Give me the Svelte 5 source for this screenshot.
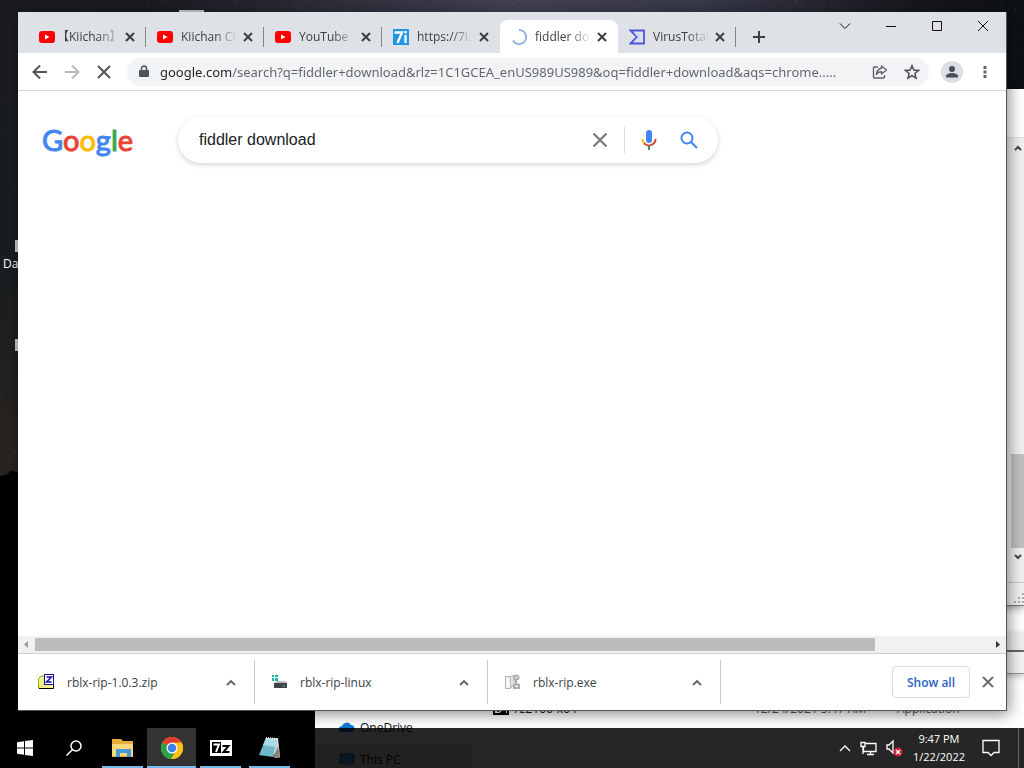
<script>
  let query = 'fiddler download';
  let address = 'google.com/search?q=fiddler+download&rlz=1C1GCEA_enUS989US989&oq=fiddler+download&aqs=chrome.....';
  let activeTab = 4;

  const tabs = [
    { icon: 'youtube', title: '【Kiichan】' },
    { icon: 'youtube', title: 'Kiichan Ch' },
    { icon: 'youtube', title: 'YouTube' },
    { icon: 'seven', title: 'https://7i.' },
    { icon: 'loading', title: 'fiddler do' },
    { icon: 'virus', title: 'VirusTotal' }
  ];

  const downloads = [
    { icon: 'zip', name: 'rblx-rip-1.0.3.zip' },
    { icon: 'drive', name: 'rblx-rip-linux' },
    { icon: 'script', name: 'rblx-rip.exe' }
  ];

  const logo = [
    ['G', 'blue'],
    ['o', 'red'],
    ['o', 'yellow'],
    ['g', 'blue'],
    ['l', 'green'],
    ['e', 'red']
  ];

  // little seeded generator so the sky always looks the same
  let seed = 7;
  function rand() {
    seed = (seed * 16807) % 2147483647;
    return seed / 2147483647;
  }
  const stars = Array.from({ length: 1400 }, () => ({
    x: rand() * 1024,
    y: rand() * 470,
    o: rand() * 0.25
  }));
</script>

<div class="desktop">
  <svg class="sky" viewBox="0 0 1024 768" preserveAspectRatio="none" aria-hidden="true">
    <defs>
      <linearGradient id="night" x1="0" y1="0" x2="0" y2="1">
        <stop offset="0" stop-color="#191b20" />
        <stop offset="0.35" stop-color="#191d1f" />
        <stop offset="0.6" stop-color="#29241f" />
      </linearGradient>
      <linearGradient id="milky" x1="0" y1="0" x2="1" y2="0">
        <stop offset="0.15" stop-color="#414152" stop-opacity="0" />
        <stop offset="0.5" stop-color="#414152" />
        <stop offset="0.68" stop-color="#383949" />
        <stop offset="0.9" stop-color="#15171b" />
        <stop offset="1" stop-color="#0e1114" />
      </linearGradient>
    </defs>
    <rect width="1024" height="768" fill="url(#night)" />
    <rect width="1024" height="120" fill="url(#milky)" />
    {#each stars as s}
      <rect x={s.x} y={s.y} width="1" height="1" fill="#fff" opacity={s.o} />
    {/each}
    <path d="M0 476l6-1 5-4 7 1h1006v296H0z" fill="#000" />
  </svg>

  <div class="shortcut">Da</div>
  <div class="chip chipTop"></div>
  <div class="chip chipOne"></div>
  <div class="chip chipTwo"></div>

  <!-- windows sitting behind the browser -->
  <div class="explorer">
    <div class="side">
      <div class="place">
        <svg width="16" height="16" viewBox="0 0 16 16"><path d="M3 13a3 3 0 0 1 0-6 5 5 0 0 1 9-1 3.600 3.600 0 0 1 1 7z" fill="#0f78d4" /></svg>
        OneDrive
      </div>
      <div class="place selected">
        <svg width="16" height="16" viewBox="0 0 16 16"><path d="M1 3h14v9H1zM5 14h6" fill="#38a6e8" stroke="#17679e" /></svg>
        This PC
      </div>
    </div>
    <div class="file">
      <span class="fileName"><svg width="16" height="16" viewBox="0 0 16 16"><path d="M1 3h14v10H1z" fill="#fff" stroke="#000" stroke-width="2" /><path d="M3 6h4l-2 5M9 7h4l-4 4h4" fill="none" stroke="#000" stroke-width="2" /></svg>7z2106-x64</span>
      <span>12/24/2021 5:47 AM</span>
      <span>Application</span>
    </div>
  </div>
  <div class="backWindow">
    <div class="backHead"></div>
    <div class="backBody">
      <svg width="17" height="16" viewBox="0 0 17 16"><path d="M8 10l3-3 3 3" fill="none" stroke="#444" stroke-width="2" /></svg>
      <div class="backTrack"><div class="backThumb"></div></div>
      <svg width="17" height="18" viewBox="0 0 17 18"><path d="M8 7l3 3 3-3" fill="none" stroke="#444" stroke-width="2" /></svg>
    </div>
    <div class="status"></div>
    <div class="grip">
      <svg width="10" height="10" viewBox="0 0 10 10"><path d="M8 0h2v2H8zM4 4h2v2H4zM8 4h2v2H8zM0 8h2v2H0zM4 8h2v2H4zM8 8h2v2H8z" fill="#b0b0b0" /></svg>
    </div>
  </div>
  <div class="backStrip"></div>

  <main class="browser">
    <header class="tabstrip">
      <div class="tabs">
        {#each tabs as tab, i}
          <div class="tab" class:active={i === activeTab} class:plain={i !== activeTab && i !== activeTab - 1}>
            <button class="tabButton" on:click={() => (activeTab = i)}>
              <svg class="favicon" width="16" height="16" viewBox="0 0 16 16">
                {#if tab.icon === 'youtube'}
                  <rect y="2" width="16" height="12" rx="3" fill="#f00" />
                  <path d="M6 5.500v5L10.500 8z" fill="#fff" />
                {:else if tab.icon === 'seven'}
                  <rect width="16" height="16" fill="#2196e3" />
                  <path d="M1.500 3.500H9L4.500 14M12.500 6v8M12.500 2v2.500" fill="none" stroke="#fff" stroke-width="2.300" />
                {:else if tab.icon === 'loading'}
                  <path d="M8 1a7 7 0 1 1-6 10.500" fill="none" stroke="#8fb1da" stroke-width="2" />
                {:else}
                  <path d="M1.500 1.500H15v13H1.500L8 8z" fill="none" stroke="#4c55e0" stroke-width="1.800" />
                  <path d="M6 5h5v6H6l3-3z" fill="#d4d8f4" />
                {/if}
              </svg>
              <span class="tabTitle">{tab.title}</span>
            </button>
            <button class="tabClose" aria-label="Close tab">
              <svg width="10" height="10" viewBox="0 0 10 10"><path d="M1 1l8 8M9 1L1 9" stroke="#3c4043" stroke-width="2" /></svg>
            </button>
          </div>
        {/each}
        <button class="newTab" aria-label="New tab">
          <svg width="14" height="14" viewBox="0 0 14 14"><path d="M7 1v12M1 7h12" stroke="#3c4043" stroke-width="2" /></svg>
        </button>
      </div>
      <div class="caption">
        <button aria-label="Search tabs"><svg width="12" height="12" viewBox="0 0 12 12"><path d="M1 3.500l5 5 5-5" /></svg></button>
        <button aria-label="Minimize"><svg width="12" height="12" viewBox="0 0 12 12"><path d="M1 6.500h10" /></svg></button>
        <button aria-label="Maximize"><svg width="12" height="12" viewBox="0 0 12 12"><path d="M1.500 1.500h9v9h-9z" /></svg></button>
        <button aria-label="Close"><svg width="12" height="12" viewBox="0 0 12 12"><path d="M1 1l10 10M11 1L1 11" /></svg></button>
      </div>
    </header>

    <div class="toolbar">
      <button class="nav" aria-label="Back"><svg width="16" height="16" viewBox="0 0 16 16"><path d="M15 8H2M8 1.500L1.500 8 8 14.500" /></svg></button>
      <button class="nav faded" aria-label="Forward"><svg width="16" height="16" viewBox="0 0 16 16"><path d="M1 8h13M8 1.500L14.500 8 8 14.500" /></svg></button>
      <button class="nav" aria-label="Stop"><svg width="16" height="16" viewBox="0 0 16 16"><path d="M2 2l12 12M14 2L2 14" /></svg></button>
      <div class="omnibox">
        <svg width="12" height="14" viewBox="0 0 12 14"><path d="M2 5h8a1 1 0 0 1 1 1v5a1 1 0 0 1-1 1H2a1 1 0 0 1-1-1V6a1 1 0 0 1 1-1z" fill="#505458" /><path d="M3.500 6V3.500a2.500 2.500 0 0 1 5 0V6" fill="none" stroke="#505458" stroke-width="1.500" /></svg>
        <input class="address" aria-label="Address" bind:value={address} />
        <button class="tool" aria-label="Share">
          <svg width="16" height="16" viewBox="0 0 16 16"><path d="M6 3H2.500a1 1 0 0 0-1 1v9a1 1 0 0 0 1 1h9a1 1 0 0 0 1-1v-2M9.500 2l5 4-5 4V7.800C7 7.800 5.500 8.500 4.500 10.500 4.800 7.500 6 4.800 9.500 4.300z" fill="none" stroke="#5f6368" stroke-width="1.400" stroke-linejoin="round" /></svg>
        </button>
        <button class="tool" aria-label="Bookmark">
          <svg width="16" height="16" viewBox="0 0 16 16"><path d="M8 1.800l1.800 4.300 4.700.4-3.600 3 1.100 4.600L8 11.600l-4 2.500 1.100-4.600-3.600-3 4.700-.4z" fill="none" stroke="#4b4f53" stroke-width="1.500" /></svg>
        </button>
      </div>
      <button class="profile" aria-label="Profile">
        <svg width="22" height="22" viewBox="0 0 22 22"><circle cx="11" cy="11" r="11" fill="#dcdee6" /><circle cx="11" cy="8" r="3" fill="#4a4d58" /><path d="M5 16.500v-1.500c0-2 4-3 6-3s6 1 6 3v1.500z" fill="#4a4d58" /></svg>
      </button>
      <button class="menu" aria-label="Menu">
        <svg width="4" height="14" viewBox="0 0 4 14"><path d="M.5 1h3v3h-3zM.5 5.500h3v3h-3zM.5 10h3v3h-3z" fill="#5f6368" /></svg>
      </button>
    </div>

    <section class="page">
      <div class="searchRow">
        <a class="logo" href="#home" aria-label="Google">{#each logo as [letter, color]}<span class={color}>{letter}</span>{/each}</a>
        <form class="searchBox" on:submit|preventDefault>
          <input aria-label="Search" bind:value={query} />
          <button type="button" aria-label="Clear" on:click={() => (query = '')}>
            <svg width="16" height="16" viewBox="0 0 16 16"><path d="M1.500 1.500l13 13M14.500 1.500l-13 13" stroke="#70757a" stroke-width="2" /></svg>
          </button>
          <span class="bar"></span>
          <button type="button" aria-label="Search by voice">
            <svg width="16" height="22" viewBox="0 0 16 22">
              <rect x="5" y="1" width="6" height="13" rx="3" fill="#4285f4" />
              <path d="M1.500 10c0 2 .7 3.500 2 4.700" fill="none" stroke="#fbbc04" stroke-width="2" />
              <path d="M3 14.300c3 2.900 7 2.900 10 0 1-1 1.500-2.400 1.500-4.300" fill="none" stroke="#d9482e" stroke-width="2" />
              <path d="M8 16v5" stroke="#4f8a55" stroke-width="2" />
            </svg>
          </button>
          <button aria-label="Google Search">
            <svg width="18" height="18" viewBox="0 0 18 18"><circle cx="7" cy="7" r="5.500" fill="none" stroke="#4285f4" stroke-width="2" /><path d="M11 11l6 6" stroke="#4285f4" stroke-width="2.200" /></svg>
          </button>
        </form>
      </div>
    </section>

    <div class="scrollbar">
      <svg width="17" height="17" viewBox="0 0 17 17"><path d="M10 5v7L6 8.500z" fill="#9a9a9a" /></svg>
      <div class="track"><div class="thumb"></div></div>
      <svg width="17" height="17" viewBox="0 0 17 17"><path d="M7 5v7l4-3.500z" fill="#333" /></svg>
    </div>

    <footer class="shelf">
      {#each downloads as d}
        <div class="download">
          <svg width="16" height="16" viewBox="0 0 16 16">
            {#if d.icon === 'zip'}
              <path d="M.5 4.500L3 2h4v12H.5z" fill="#e8f49a" stroke="#8aa800" />
              <path d="M2 6h12v8H2z" fill="#f5f080" />
              <path d="M1 14.500h14.500V10" fill="none" stroke="#000" />
              <rect x="6.500" y=".5" width="9" height="10" fill="#fff" stroke="#1a10a0" />
              <path d="M8.500 3h5l-5 5h5" fill="none" stroke="#1a10a0" stroke-width="1.500" />
            {:else if d.icon === 'drive'}
              <path d="M1 1h2v2H1zM4 1h3v2H4zM1 4h2v3H1zM4 4h3v3H4z" fill="#19b5a8" />
              <path d="M4 9l2-2h8l2 2z" fill="#b9bdc0" />
              <path d="M3 9h13v5H3z" fill="#3d444a" />
              <path d="M12 12h2" stroke="#5fd07a" />
            {:else}
              <path d="M1.500 2.500h6c-1 3 1 8-1 12h-5z" fill="#f6f6f6" stroke="#b0b0b0" />
              <path d="M6 3l4-2v9l-3 4z" fill="#e4e4e4" stroke="#bbb" />
              <circle cx="12.500" cy="3.500" r="2.500" fill="#ccc" stroke="#999" />
              <path d="M12 6v4l-3 3M12 10l3 1v3H9" fill="none" stroke="#aaa" stroke-width="2" />
            {/if}
          </svg>
          <span>{d.name}</span>
          <button aria-label="Options for {d.name}"><svg width="10" height="7" viewBox="0 0 10 7"><path d="M1 6l4-4 4 4" fill="none" stroke="#5f6368" stroke-width="1.800" /></svg></button>
        </div>
      {/each}
      <button class="showAll">Show all</button>
      <button class="shelfClose" aria-label="Close downloads"><svg width="12" height="12" viewBox="0 0 12 12"><path d="M1 1l10 10M11 1L1 11" stroke="#6a6e72" stroke-width="2" /></svg></button>
    </footer>
  </main>

  <nav class="taskbar">
    <button class="task" aria-label="Start">
      <svg width="16" height="16" viewBox="0 0 16 16"><path d="M0 2.300L7 1.300v6.200H0zM8 1.100L16 0v7.500H8zM0 8.500h7v6.200L0 13.700zM8 8.500h8V16l-8-1.100z" fill="#fff" /></svg>
    </button>
    <button class="task" aria-label="Search">
      <svg width="16" height="16" viewBox="0 0 16 16"><circle cx="10" cy="6" r="5" fill="none" stroke="#fff" stroke-width="1.500" /><path d="M6.500 9.500L.5 15.500" stroke="#fff" stroke-width="1.500" /></svg>
    </button>
    <button class="task open" aria-label="File Explorer">
      <svg width="24" height="22" viewBox="0 0 24 22"><path d="M1 2h9l2 2h10v16H1z" fill="#e9ad3c" /><path d="M1 7h21v12H1z" fill="#fbd978" /><path d="M5 20v-8h15v8h-4v-4H9v4z" fill="#459bd8" /></svg>
    </button>
    <button class="task open current" aria-label="Google Chrome">
      <svg width="24" height="24" viewBox="0 0 24 24"><circle cx="12" cy="12" r="11" fill="#fbc116" /><path d="M12 12L2.500 6.500A11 11 0 0 1 21.500 6.500z" fill="#e33b2e" /><path d="M12 12L2.500 6.500A11 11 0 0 0 11 23l4-6z" fill="#28a34a" /><path d="M12 6.500h9.500a11 11 0 0 1-10.500 16.500l5.500-9z" fill="#fbc116" /><circle cx="12" cy="12" r="5.500" fill="#fff" /><circle cx="12" cy="12" r="4.300" fill="#3d7fe8" /></svg>
    </button>
    <button class="task open" aria-label="7-Zip">
      <svg width="22" height="18" viewBox="0 0 22 18"><path d="M0 1h22v16H0z" fill="#fff" /><path d="M2 3h9v11H2z" fill="#000" /><path d="M3.500 5.500h5.500L6 13" fill="none" stroke="#fff" stroke-width="2" /><path d="M12.500 7h6l-5 6h6" fill="none" stroke="#000" stroke-width="2" /></svg>
    </button>
    <button class="task open" aria-label="Notepad">
      <svg width="24" height="24" viewBox="0 0 24 24"><path d="M8 3l12-1 2 19-5 1z" fill="#d6dbdc" /><path d="M8 2l11 1-4 18L1 19z" fill="#6fb6c8" /><path d="M8 2l11 1-2 8L5 9z" fill="#a9dbe4" /><path d="M15 21l5-11 2 12z" fill="#8b8476" /><path d="M8 2l11 1" stroke="#eee" stroke-dasharray="1 1" stroke-width="2" /></svg>
    </button>
    <div class="tray">
      <svg width="12" height="8" viewBox="0 0 12 8"><path d="M1 7l5-5 5 5" /></svg>
      <svg width="17" height="16" viewBox="0 0 17 16"><path d="M5 3.500h11v8H3.500V7M7 14.500h7M10.500 12v2M1 2.500h4v4H1zM3 7v7" /></svg>
      <svg width="18" height="18" viewBox="0 0 18 18"><path d="M1 6h2l4-4v12l-4-4H1z" /><circle cx="12" cy="13" r="4.500" fill="#c9273c" stroke="none" /><path d="M10 11l4 4M14 11l-4 4" /></svg>
      <div class="clock"><span>9:47 PM</span><span>1/22/2022</span></div>
      <svg width="18" height="18" viewBox="0 0 18 18"><path d="M1 1.500h16v12h-5l-3 3-3-3H1z" /></svg>
    </div>
    <div class="peek"></div>
  </nav>
</div>

<style>
  :global(body) {
    background: #000;
  }
  .desktop {
    position: relative;
    height: 100vh;
    min-height: 480px;
    overflow: hidden;
    font-family: "Open Sans", "Noto Sans CJK JP", sans-serif;
    font-size: 12px;
    color: #3c4043;
  }
  .desktop * {
    box-sizing: border-box;
  }
  button, input {
    font: inherit;
    color: inherit;
    background: none;
    border: 0;
    padding: 0;
    margin: 0;
    outline: none;
    min-width: 0;
  }
  button {
    display: flex;
    align-items: center;
    justify-content: center;
  }
  svg {
    flex: none;
  }
  .sky {
    position: absolute;
    width: 100%;
    height: 100%;
  }

  /* bits of desktop icons peeking out */
  .shortcut {
    position: absolute;
    left: 3px;
    top: 255px;
    color: #fff;
  }
  .chip {
    position: absolute;
    background: #ccc;
    left: 15px;
    width: 4px;
    height: 12px;
  }
  .chipOne {
    top: 240px;
  }
  .chipTwo {
    top: 339px;
  }
  .chipTop {
    left: 179px;
    top: 10px;
    width: 25px;
    height: 3px;
  }

  /* windows behind */
  .explorer {
    position: absolute;
    left: 315px;
    right: 0;
    top: 605px;
    bottom: 0;
    background: #fff;
    color: #111;
    display: flex;
    align-items: flex-start;
    padding-top: 92px;
  }
  .side {
    flex: none;
    width: 157px;
    padding-top: 14px;
  }
  .place {
    display: flex;
    align-items: center;
    gap: 5px;
    height: 32px;
    padding-left: 24px;
  }
  .selected {
    background: #d9d9d9;
  }
  .file {
    display: flex;
    flex: 1;
    min-width: 0;
    padding-left: 21px;
    line-height: 24px;
  }
  .file span {
    flex: none;
    width: 143px;
    white-space: nowrap;
    color: #555;
  }
  .file .fileName {
    display: flex;
    align-items: center;
    gap: 4px;
    width: 261px;
    color: #111;
  }
  .backWindow {
    position: absolute;
    right: 0;
    top: 89px;
    width: 200px;
    height: 517px;
    background: #f0f0f0;
    border-bottom: 1px solid #777;
    box-shadow: 0 2px 8px #0006;
    display: flex;
    flex-direction: column;
  }
  .backHead {
    height: 49px;
    background: #fff;
    border-bottom: 1px solid #ddd;
  }
  .backBody {
    flex: 1;
    display: flex;
    flex-direction: column;
    align-items: flex-end;
    padding-top: 2px;
  }
  .backTrack {
    flex: 1;
    width: 13px;
    display: flex;
    flex-direction: column;
    justify-content: flex-end;
  }
  .backThumb {
    height: 94px;
    background: #c1c1c1;
  }
  .status {
    height: 16px;
  }
  .grip {
    display: flex;
    align-items: flex-end;
    justify-content: flex-end;
    height: 23px;
    padding-bottom: 2px;
    border-top: 1px solid #ccc;
  }
  .backStrip {
    position: absolute;
    right: 0;
    top: 632px;
    width: 200px;
    height: 42px;
    background: linear-gradient(#eee 18px, #666 18px, #666 20px, #f4f4f4 20px);
    border-bottom: 1px solid #999;
    box-shadow: 0 2px 6px #0004;
  }

  /* browser window */
  .browser {
    position: absolute;
    inset: 12px 17px 57px 18px;
    background: #fff;
    display: flex;
    flex-direction: column;
    border-right: 1px solid #555;
    border-bottom: 1px solid #555;
    box-shadow: 2px 3px 14px #0007;
  }
  .tabstrip {
    display: flex;
    height: 41px;
    background: #dee1e6;
  }
  .tabs {
    display: flex;
    flex: 1;
    min-width: 0;
    padding: 8px 0 0 10px;
  }
  .tab {
    position: relative;
    display: flex;
    align-items: center;
    flex: 0 1 118px;
    min-width: 0;
    height: 33px;
    padding: 0 9px 0 11px;
  }
  .plain::after {
    content: "";
    position: absolute;
    right: 0;
    top: 7px;
    width: 1px;
    height: 20px;
    background: #80868b;
  }
  .active {
    background: #fff;
    border-radius: 8px 8px 0 0;
  }
  .tabButton {
    flex: 1;
    justify-content: flex-start;
    gap: 8px;
    overflow: hidden;
  }
  .tabTitle {
    flex: 1;
    text-align: left;
    white-space: nowrap;
    overflow: hidden;
    line-height: 18px;
    font-feature-settings: "halt";
    mask-image: linear-gradient(to right, #000 calc(100% - 24px), transparent calc(100% - 2px));
  }
  .tabClose {
    width: 14px;
    height: 16px;
    margin-left: 2px;
  }
  .newTab {
    width: 28px;
    height: 33px;
    margin-left: 9px;
  }
  .caption {
    display: flex;
    height: 28px;
  }
  .caption button {
    width: 46px;
  }
  .caption path {
    fill: none;
    stroke: #111;
  }
  .toolbar {
    display: flex;
    align-items: center;
    height: 38px;
    padding: 0 13px 0 6px;
    border-bottom: 1px solid #d5d7da;
  }
  .nav {
    width: 32px;
    height: 32px;
  }
  .nav path {
    fill: none;
    stroke: #505458;
    stroke-width: 2;
  }
  .faded path {
    stroke: #b8babd;
  }
  .omnibox {
    display: flex;
    align-items: center;
    flex: 1;
    min-width: 0;
    height: 28px;
    margin-left: 7px;
    padding: 0 9px 0 11px;
    border-radius: 14px;
    background: #f1f3f4;
  }
  .address {
    flex: 1;
    height: 24px;
    margin-left: 10px;
    font-family: "Noto Sans", sans-serif;
    font-size: 13px;
    background: linear-gradient(to right, #202124 72px, #5f6368 72px);
    background-clip: text;
    color: transparent;
  }
  .tool {
    width: 16px;
    height: 24px;
    margin-left: 8px;
  }
  .tool + .tool {
    margin-left: 16px;
  }
  .profile {
    margin-left: 12px;
  }
  .menu {
    width: 16px;
    height: 24px;
    margin-left: 14px;
  }

  /* page */
  .page {
    flex: 1;
    min-height: 0;
    overflow: hidden;
    padding: 26px 24px;
  }
  .searchRow {
    display: flex;
    align-items: center;
  }
  .logo {
    width: 136px;
    font: 29px/46px Lato, sans-serif;
    text-decoration: none;
    -webkit-text-stroke: 1px;
  }
  .blue {
    color: #4285f4;
  }
  .red {
    color: #ea4335;
  }
  .yellow {
    color: #fbbc05;
  }
  .green {
    color: #34a853;
  }
  .searchBox {
    display: flex;
    align-items: center;
    flex: 0 1 540px;
    min-width: 0;
    height: 46px;
    padding: 0 19px 0 21px;
    border-radius: 23px;
    box-shadow: 0 2px 5px #20212430;
  }
  .searchBox input {
    flex: 1;
    height: 34px;
    font: 16px "Liberation Sans", sans-serif;
    color: #202124;
  }
  .searchBox button {
    width: 20px;
    height: 32px;
    margin-left: 20px;
  }
  .searchBox .bar + button {
    margin-left: 14px;
  }
  .bar {
    width: 1px;
    height: 26px;
    margin-left: 14px;
    background: #dadce0;
  }
  .scrollbar {
    display: flex;
    height: 17px;
    background: #f1f1f1;
  }
  .track {
    flex: 1;
    padding: 2px 0;
  }
  .thumb {
    width: 88%;
    height: 13px;
    background: #bcbcbc;
  }

  /* downloads */
  .shelf {
    display: flex;
    align-items: center;
    height: 57px;
    border-top: 1px solid #d0d2d5;
    padding-right: 11px;
  }
  .download {
    display: flex;
    align-items: center;
    flex: 0 1 233px;
    height: 44px;
    padding: 0 12px 0 16px;
    border-right: 1px solid #c8cacd;
  }
  .download:first-child {
    flex-basis: 237px;
    padding-left: 20px;
  }
  .download span {
    flex: 1;
    margin-left: 13px;
  }
  .download button {
    width: 22px;
    height: 22px;
  }
  .showAll {
    width: 78px;
    height: 32px;
    margin-left: auto;
    border: 1px solid #dadce0;
    border-radius: 4px;
    color: #2a63c4;
    font-weight: 600;
  }
  .shelfClose {
    width: 14px;
    height: 20px;
    margin-left: 11px;
  }

  .taskbar {
    position: absolute;
    inset: auto 0 0;
    display: flex;
    height: 40px;
    background: #000000d9;
    color: #fff;
  }
  .task {
    position: relative;
    width: 49px;
    height: 40px;
  }
  .open::after {
    content: "";
    position: absolute;
    left: 4px;
    right: 4px;
    bottom: 0;
    height: 2px;
    background: #76b9ed;
  }
  .current {
    background: #333;
  }
  .current::after {
    left: 0;
    right: 0;
  }
  .tray {
    display: flex;
    align-items: center;
    gap: 9px;
    margin-left: auto;
    padding-right: 18px;
  }
  .tray path {
    fill: none;
    stroke: #fff;
    stroke-width: 1.300;
  }
  .clock {
    display: flex;
    flex-direction: column;
    align-items: center;
    font-size: 11px;
    line-height: 18px;
    margin-right: 8px;
  }
  .peek {
    width: 6px;
    border-left: 1px solid #666;
  }
</style>
